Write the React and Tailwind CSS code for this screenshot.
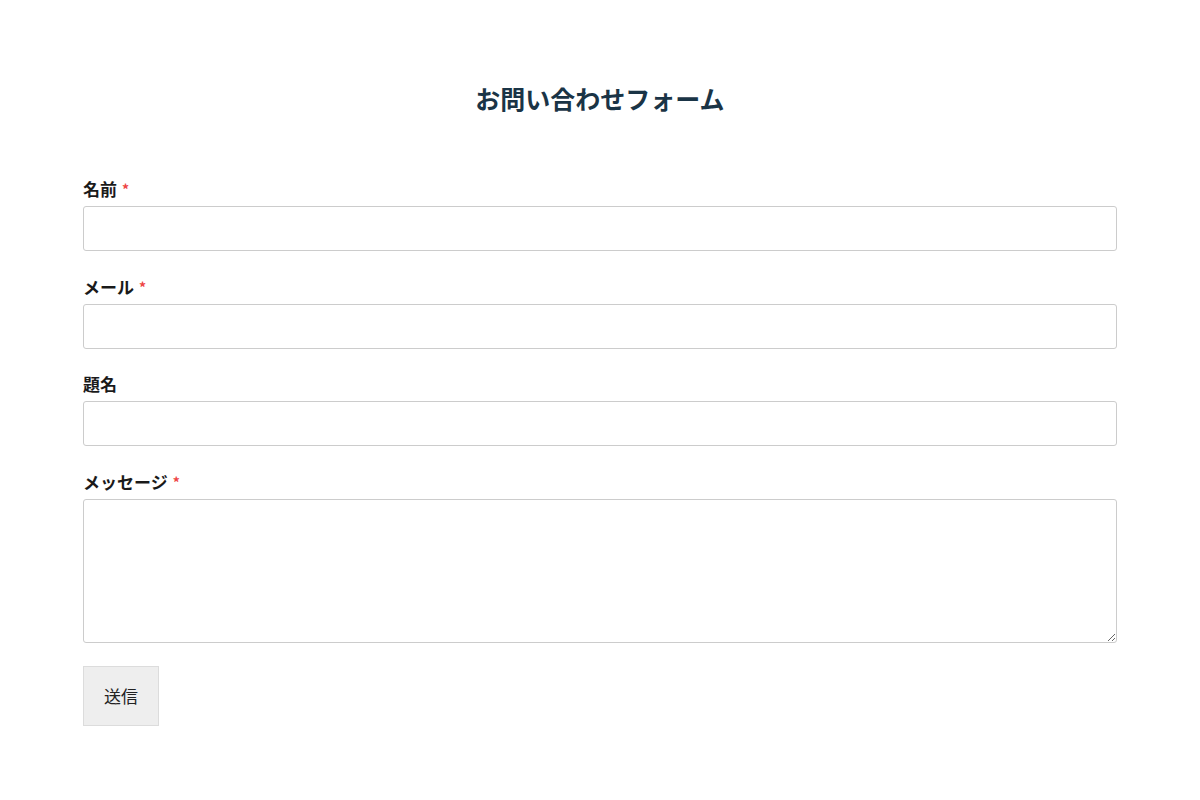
import React from "react";

const FIELDS = [
  { label: "名前", required: true, type: "input" },
  { label: "メール", required: true, type: "input" },
  { label: "題名", required: false, type: "input" },
  { label: "メッセージ", required: true, type: "textarea" },
];

export default function App() {
  return (
    <div
      className="min-h-[800px] w-[1200px] bg-white px-[83px] pt-[82px]"
      style={{ fontFamily: '"Noto Sans CJK JP", "Noto Sans", sans-serif' }}
    >
      <h2 className="text-center text-[25px] font-bold leading-[32px] text-[#1a3446]">
        お問い合わせフォーム
      </h2>
      <form className="mt-[63px]" onSubmit={(e) => e.preventDefault()}>
        {FIELDS.map((f) => (
          <div key={f.label} className="mb-[23.5px]">
            <label className="mb-[5px] block text-[17px] font-bold leading-[24px] text-[#1a1a1a]">
              {f.label}
              {f.required && <span className="ml-[5px] align-top text-[14px] text-[#ee4444]">*</span>}
            </label>
            {f.type === "input" ? (
              <input
                type="text"
                className="block h-[45px] w-full rounded-[3px] border border-[#cccccc] bg-white px-3"
              />
            ) : (
              <textarea className="block h-[144px] w-full rounded-[3px] border border-[#cccccc] bg-white px-3" />
            )}
          </div>
        ))}
        <button
          type="submit"
          className="h-[60px] w-[76px] border border-[#dcdcdc] bg-[#eeeeee] text-[17px] text-[#222]"
        >
          送信
        </button>
      </form>
    </div>
  );
}
